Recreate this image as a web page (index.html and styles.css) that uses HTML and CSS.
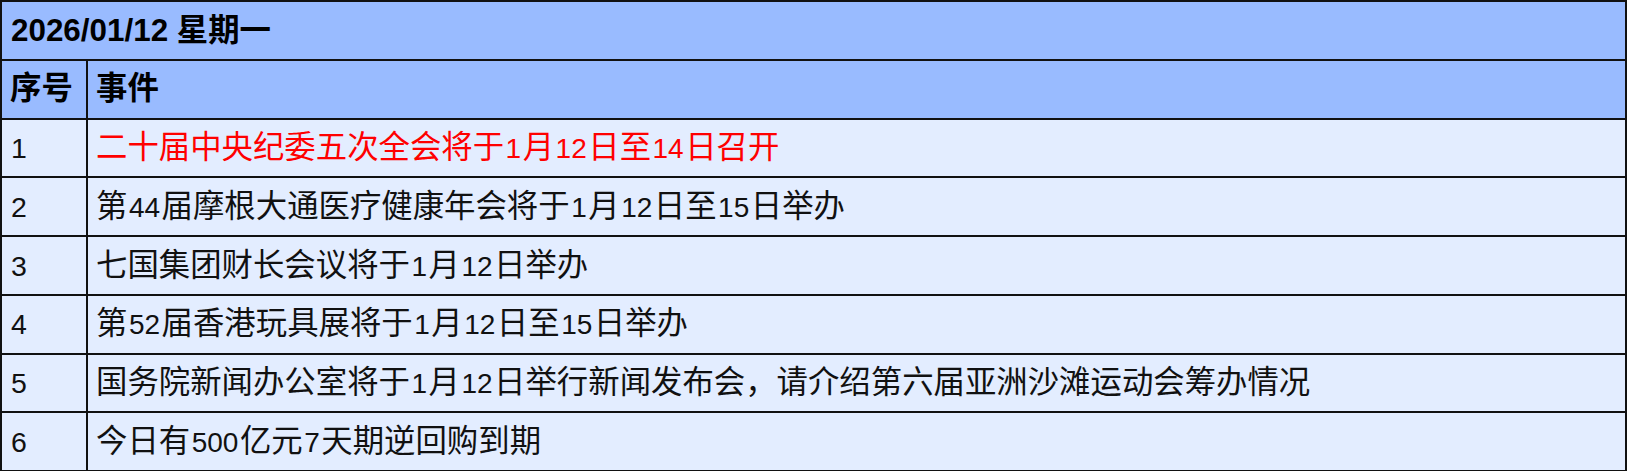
FILE: index.html
```html
<!DOCTYPE html>
<html lang="zh">
<head>
<meta charset="utf-8">
<title>2026/01/12 星期一</title>
<link rel="stylesheet" href="styles.css">
</head>
<body>
<table class="events">
  <thead>
    <tr class="date-row">
      <th colspan="2" class="date-cell">2026/01/12 星期一</th>
    </tr>
    <tr class="head-row">
      <th class="idx">序号</th>
      <th class="evt">事件</th>
    </tr>
  </thead>
  <tbody>
    <tr>
      <td class="idx"><span class="no">1</span></td>
      <td class="evt hot">二十届中央纪委五次全会将于<span class="num">1</span>月<span class="num">12</span>日至<span class="num">14</span>日召开</td>
    </tr>
    <tr>
      <td class="idx"><span class="no">2</span></td>
      <td class="evt">第<span class="num">44</span>届摩根大通医疗健康年会将于<span class="num">1</span>月<span class="num">12</span>日至<span class="num">15</span>日举办</td>
    </tr>
    <tr>
      <td class="idx"><span class="no">3</span></td>
      <td class="evt">七国集团财长会议将于<span class="num">1</span>月<span class="num">12</span>日举办</td>
    </tr>
    <tr>
      <td class="idx"><span class="no">4</span></td>
      <td class="evt">第<span class="num">52</span>届香港玩具展将于<span class="num">1</span>月<span class="num">12</span>日至<span class="num">15</span>日举办</td>
    </tr>
    <tr>
      <td class="idx"><span class="no">5</span></td>
      <td class="evt">国务院新闻办公室将于<span class="num">1</span>月<span class="num">12</span>日举行新闻发布会，请介绍第六届亚洲沙滩运动会筹办情况</td>
    </tr>
    <tr>
      <td class="idx"><span class="no">6</span></td>
      <td class="evt">今日有<span class="num">500</span>亿元<span class="num">7</span>天期逆回购到期</td>
    </tr>
  </tbody>
</table>
</body>
</html>
```

FILE: styles.css
```css
html, body {
  margin: 0;
  padding: 0;
  background: #ffffff;
}

.events {
  width: 1627px;
  border-collapse: collapse;
  border: 2px solid #111;
  font-family: "Liberation Sans", "Noto Sans CJK SC", sans-serif;
  font-size: 31.4px;
  line-height: 1.2;
  color: #111;
}

.events tr {
  height: 58.75px;
}

.events th,
.events td {
  border: 2px solid #111;
  padding: 0 8px;
  text-align: left;
  vertical-align: middle;
  white-space: nowrap;
}

.events th {
  background: #99bbff;
  font-weight: bold;
  color: #000;
}

.events .date-cell {
  padding-left: 9px;
}

.events td {
  background: #e3edff;
  font-weight: normal;
}

.events .idx {
  width: 68px;
}

.events .no {
  font-size: 28.5px;
  padding-left: 1px;
}

.events .num {
  font-size: 28px;
  margin: 0 1.5px;
}

.events .hot {
  color: #ff0000;
}
```
